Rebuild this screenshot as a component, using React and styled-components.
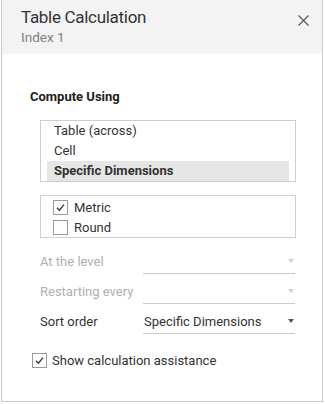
import React from 'react'
import styled, { createGlobalStyle } from 'styled-components'

const GlobalStyle = createGlobalStyle`
  html, body {
    margin: 0;
    padding: 0;
    background: #ffffff;
  }
  body {
    font-family: Roboto, "Liberation Sans", Arial, sans-serif;
    color: #333;
  }
`

const Dialog = styled.div`
  box-sizing: border-box;
  width: 322px;
  height: 402px;
  margin-left: 1px;
  border: 1px solid #cbcbcb;
  border-top: none;
  background: #fff;
  display: flex;
  flex-direction: column;
`

const Header = styled.div`
  height: 54px;
  background: #f3f3f3;
  display: flex;
  justify-content: space-between;
  align-items: flex-start;
  padding: 6px 13px 0 19px;
  box-sizing: border-box;
`

const Titles = styled.div`
  display: flex;
  flex-direction: column;
`

const Title = styled.div`
  font-size: 17px;
  letter-spacing: -0.3px;
  line-height: 22px;
  color: #333;
`

const Subtitle = styled.div`
  font-size: 13.5px;
  line-height: 18px;
  color: #808080;
`

const CloseButton = styled.button`
  border: none;
  background: none;
  padding: 0;
  margin-top: 9px;
  width: 11px;
  height: 11px;
  display: flex;
  align-items: center;
  justify-content: center;
  cursor: pointer;
`

const Body = styled.div`
  display: flex;
  flex-direction: column;
  padding: 35px 27px 0 28px;
`

const SectionTitle = styled.div`
  font-size: 13px;
  font-weight: 700;
  line-height: 16px;
  color: #222;
  margin-bottom: 15px;
`

const Indented = styled.div`
  display: flex;
  flex-direction: column;
  padding-left: 10px;
`

const Box = styled.div`
  box-sizing: border-box;
  width: 256px;
  border: 1px solid #cfcfcf;
  padding: ${p => p.$pad || '0 6px'};
  display: flex;
  flex-direction: column;
  margin-bottom: ${p => p.$mb || 0}px;
`

const ListItem = styled.div`
  height: 20px;
  line-height: 20px;
  padding-left: 7px;
  font-size: 13px;
  color: #333;
  font-weight: ${p => (p.$selected ? 700 : 400)};
  background: ${p => (p.$selected ? '#e6e6e6' : 'transparent')};
`

const CheckRow = styled.label`
  display: flex;
  align-items: center;
  height: 20px;
  gap: ${p => p.$gap || 6}px;
  font-size: 13px;
  color: #333;
  padding-left: ${p => p.$indent || 0}px;
`

const Square = styled.span`
  box-sizing: border-box;
  width: 15px;
  height: 15px;
  border: 1px solid #9a9a9a;
  background: #fff;
  display: flex;
  align-items: center;
  justify-content: center;
  flex: none;
`

const FieldRow = styled.div`
  display: grid;
  grid-template-columns: 103px 152px;
  align-items: end;
  height: 30px;
`

const FieldLabel = styled.div`
  font-size: 13px;
  line-height: 16px;
  padding-bottom: 4px;
  color: ${p => (p.$disabled ? '#b0b0b0' : '#333')};
`

const Select = styled.div`
  box-sizing: border-box;
  height: 26px;
  border-bottom: 1px solid #cccccc;
  display: flex;
  align-items: flex-end;
  justify-content: space-between;
  padding: 0 0 3px 1px;
  font-size: 13px;
  line-height: 16px;
  color: #333;
`

const Arrow = styled.span`
  width: 0;
  height: 0;
  border-left: 3.5px solid transparent;
  border-right: 3.5px solid transparent;
  border-top: 4px solid ${p => (p.$disabled ? '#cfcfcf' : '#555')};
  margin: 0 1px 7px 0;
`

const Footer = styled.div`
  margin-top: 16px;
`

const Check = ({ checked }) => (
  <Square>
    {checked && (
      <svg width="11" height="11" viewBox="0 0 11 11">
        <path d="M2 5.8 L4.4 8.2 L9 2.6" fill="none" stroke="#333" strokeWidth="1.3" />
      </svg>
    )}
  </Square>
)

const Field = ({ label, value, disabled }) => (
  <FieldRow>
    <FieldLabel $disabled={disabled}>{label}</FieldLabel>
    <Select>
      <span>{value}</span>
      <Arrow $disabled={disabled} />
    </Select>
  </FieldRow>
)

export default function App() {
  return (
    <>
      <GlobalStyle />
      <Dialog>
        <Header>
          <Titles>
            <Title>Table Calculation</Title>
            <Subtitle>Index 1</Subtitle>
          </Titles>
          <CloseButton aria-label="Close">
            <svg width="11" height="11" viewBox="0 0 11 11">
              <path d="M0.5 0.5 L10.5 10.5 M10.5 0.5 L0.5 10.5" stroke="#555" strokeWidth="1.1" />
            </svg>
          </CloseButton>
        </Header>
        <Body>
          <SectionTitle>Compute Using</SectionTitle>
          <Indented>
            <Box $mb={13}>
              <ListItem>Table (across)</ListItem>
              <ListItem>Cell</ListItem>
              <ListItem $selected>Specific Dimensions</ListItem>
            </Box>
            <Box $pad="1px 12px 0" $mb={6}>
              <CheckRow>
                <Check checked />
                Metric
              </CheckRow>
              <CheckRow>
                <Check />
                Round
              </CheckRow>
            </Box>
            <Field label="At the level" disabled />
            <Field label="Restarting every" disabled />
            <Field label="Sort order" value="Specific Dimensions" />
          </Indented>
          <Footer>
            <CheckRow $indent={2} $gap={5}>
              <Check checked />
              Show calculation assistance
            </CheckRow>
          </Footer>
        </Body>
      </Dialog>
    </>
  )
}
